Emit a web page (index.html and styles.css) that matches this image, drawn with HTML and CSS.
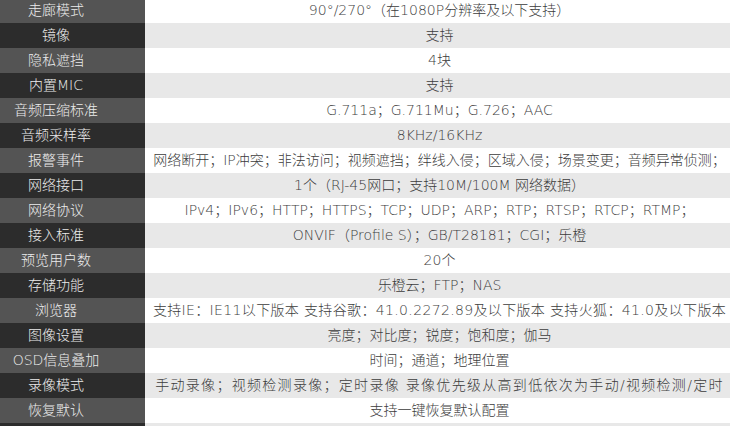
FILE: index.html
```html
<!DOCTYPE html>
<html lang="zh-CN">

<head>
    <meta charset="UTF-8">
    <title>参数</title>
    <link rel="stylesheet" href="styles.css">
</head>

<body>
    <div id="spec">
        <div class="row"><div class="name">走廊模式</div><div class="value">90°/270°（在1080P分辨率及以下支持）</div></div>
        <div class="row"><div class="name">镜像</div><div class="value">支持</div></div>
        <div class="row"><div class="name">隐私遮挡</div><div class="value">4块</div></div>
        <div class="row"><div class="name">内置MIC</div><div class="value">支持</div></div>
        <div class="row"><div class="name">音频压缩标准</div><div class="value">G.711a；G.711Mu；G.726；AAC</div></div>
        <div class="row"><div class="name">音频采样率</div><div class="value">8KHz/16KHz</div></div>
        <div class="row"><div class="name">报警事件</div><div class="value">网络断开；IP冲突；非法访问；视频遮挡；绊线入侵；区域入侵；场景变更；音频异常侦测；</div></div>
        <div class="row"><div class="name">网络接口</div><div class="value">1个（RJ-45网口；支持10M/100M 网络数据）</div></div>
        <div class="row"><div class="name">网络协议</div><div class="value">IPv4；IPv6；HTTP；HTTPS；TCP；UDP；ARP；RTP；RTSP；RTCP；RTMP；</div></div>
        <div class="row"><div class="name">接入标准</div><div class="value">ONVIF（Profile S）；GB/T28181；CGI；乐橙</div></div>
        <div class="row"><div class="name">预览用户数</div><div class="value">20个</div></div>
        <div class="row"><div class="name">存储功能</div><div class="value">乐橙云；FTP；NAS</div></div>
        <div class="row"><div class="name">浏览器</div><div class="value loose">支持IE：IE11以下版本 支持谷歌：41.0.2272.89及以下版本 支持火狐：41.0及以下版本</div></div>
        <div class="row"><div class="name">图像设置</div><div class="value">亮度；对比度；锐度；饱和度；伽马</div></div>
        <div class="row"><div class="name">OSD信息叠加</div><div class="value">时间；通道；地理位置</div></div>
        <div class="row"><div class="name">录像模式</div><div class="value wide">手动录像；视频检测录像；定时录像 录像优先级从高到低依次为手动/视频检测/定时</div></div>
        <div class="row"><div class="name">恢复默认</div><div class="value">支持一键恢复默认配置</div></div>
        <div class="row"><div class="name"></div><div class="value"></div></div>
    </div>
</body>

</html>
```

FILE: styles.css
```css
* {
    margin: 0;
    padding: 0;
}

body {
    height: 426px;
    background-color: #fff;
    font-family: "DejaVu Sans", "Noto Sans CJK SC", sans-serif;
    font-size: 14px;
    font-weight: 200;
    overflow: hidden;
}

#spec {
    margin-top: -2px;
}

.row {
    display: grid;
    grid-template-columns: 145px 585px;
    height: 25px;
    line-height: 25px;
}

.name {
    padding-right: 33px;
    text-align: center;
    color: #ececec;
    background-color: #545454;
    white-space: nowrap;
}

.value {
    padding-left: 4px;
    text-align: center;
    color: #3c3c3c;
    background-color: #fff;
    white-space: nowrap;
}

.value.loose {
    letter-spacing: 0.35px;
}

.value.wide {
    letter-spacing: 1.3px;
}

.row:nth-child(even) .name {
    background-color: #2c2c2c;
}

.row:nth-child(even) .value {
    background-color: #e8e8e8;
}
```
